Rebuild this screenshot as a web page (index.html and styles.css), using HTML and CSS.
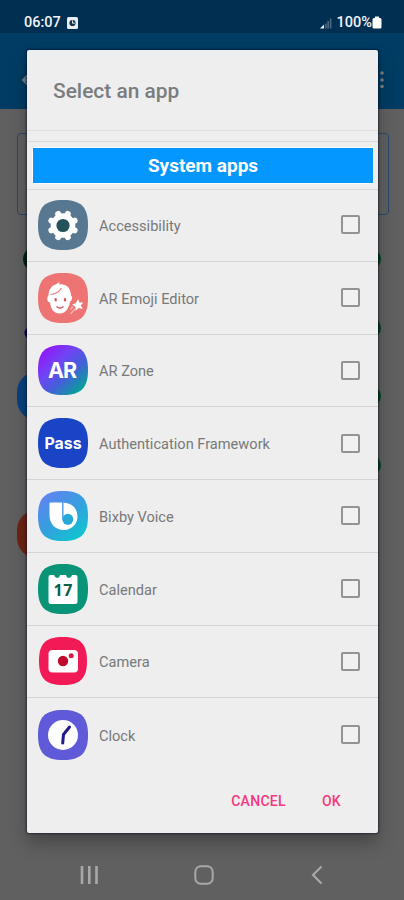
FILE: index.html
```html
<!DOCTYPE html>
<html lang="en">
<head>
<meta charset="utf-8">
<title>Select an app</title>
<link rel="stylesheet" href="styles.css">
</head>
<body>
<div class="screen">
  <header class="status">
    <span class="time">06:07</span>
    <svg class="notice" width="11" height="12" viewBox="0 0 11 12"><rect width="11" height="12" rx="1.5" fill="#e9edf2"/><circle cx="5.5" cy="6" r="3.1" fill="#16324e"/><path d="M5.5 3.5v2.7h2.3" stroke="#e9edf2" fill="none"/></svg>
    <span class="grow"></span>
    <svg class="signal" width="12" height="12" viewBox="0 0 12 12"><path d="M0 11.5 4 7.5V11.5Z" fill="#eef1f6"/><path d="M5 6.5h1.8v5H5zM7.3 4h1.8v7.500H7.300zM9.800 1.500h1.700v10H9.800z" fill="#48657f"/></svg>
    <span class="percent">100%</span>
    <svg class="battery" width="10" height="13" viewBox="0 0 10 13"><path d="M3 .5h4V2h1q1.500 0 1.500 1.500v7.500q0 1.500-1.500 1.500H2Q.5 12.500.5 11V3.500Q.5 2 2 2h1Z" fill="#fff"/></svg>
  </header>
  <div class="appbar">
    <svg width="16" height="16" viewBox="0 0 16 16"><path d="M9 1 2 8l7 7M2 8h14" fill="none" stroke="#6f7e8a" stroke-width="2"/></svg>
    <svg width="4" height="18" viewBox="0 0 4 18"><g fill="#7b7f83"><circle cx="2" cy="2" r="1.800"/><circle cx="2" cy="9" r="1.800"/><circle cx="2" cy="15.500" r="1.800"/></g></svg>
  </div>
  <div class="card"></div>
  <div class="back-list">
    <div class="back-row"><svg width="48" height="48" viewBox="0 0 48 48"><circle cx="18" cy="24" r="12" fill="#002414"/></svg><i class="switch"></i></div>
    <div class="back-row"><svg width="48" height="48" viewBox="0 0 48 48"><circle cx="14" cy="29" r="6.500" fill="#080058"/></svg><i class="switch"></i></div>
    <div class="back-row"><svg width="48" height="48" viewBox="0 0 48 48"><rect width="48" height="48" rx="20" fill="#06427e"/></svg><i class="switch"></i></div>
    <div class="back-row"><span></span><i class="switch"></i></div>
    <div class="back-row"><svg width="48" height="48" viewBox="0 0 48 48"><rect width="48" height="48" rx="20" fill="#6d2415"/></svg></div>
  </div>
  <nav class="navbar">
    <svg width="19" height="20" viewBox="0 0 19 20"><path d="M2 1v18M9.300 1v18M16.500 1v18" stroke="#a8a8a8" stroke-width="2.600"/></svg>
    <svg width="20" height="20" viewBox="0 0 20 20"><rect x="1.300" y="1.300" width="17.400" height="17.400" rx="5.500" fill="none" stroke="#a8a8a8" stroke-width="2"/></svg>
    <svg width="12" height="20" viewBox="0 0 12 20"><path d="M10.500 1.500 2 10l8.500 8.500" fill="none" stroke="#a8a8a8" stroke-width="2.200"/></svg>
  </nav>

  <section class="dialog">
    <h1 class="title">Select an app</h1>
    <div class="section"><h2>System apps</h2></div>
    <ul class="apps">
      <li><svg class="icon" viewBox="0 0 50 50"><path fill="#587892" d="M25 0C43 0 50 7 50 25S43 50 25 50 0 43 0 25 7 0 25 0Z"/><circle cx="25" cy="25.500" r="12.300" fill="#fff"/><g stroke="#fff" stroke-width="6" stroke-linecap="round"><path d="M20.200 13.900l9.600 23.200M29.800 13.900 20.200 37.100M13.400 20.700l23.200 9.600M36.600 20.700 13.400 30.300"/></g><circle cx="25" cy="25.500" r="6.600" fill="#24535b"/></svg><span class="name">Accessibility</span><i class="check"></i></li>
      <li><svg class="icon" viewBox="0 0 50 50"><path fill="#ed7472" d="M25 0C43 0 50 7 50 25S43 50 25 50 0 43 0 25 7 0 25 0Z"/><path fill="#fff" d="M10.500 22.500C10.500 16 14 12.500 18.500 11q1-1 3-1.800-.5 1.500-.3 2C28.500 10.500 33 15 33 22.500q1.500.5 1 3t-2 3.300C31 36 27 40.500 21.500 40.500S13 36.500 12 29.500Q9 29 9.300 25.500 9.500 23 10.500 22.500Z"/><path d="M12.500 21.500q8-1 11-6.500" fill="none" stroke="#ed7472" stroke-width="1.100"/><path d="M17.700 26v1.500M27 26v1.500" stroke="#cf5360" stroke-width="2.200" stroke-linecap="round"/><path d="M18.500 33.500q3.500 3 7 0" fill="none" stroke="#d55c65" stroke-width="1.600"/><path fill="#fff" d="m40 26 1.500 3.600 3.800-.2-2.400 3.100 1.800 3.600-3.900-1-3.100 2.700-.3-4-3.400-2.200 3.800-1.300Z"/><path d="m37 36-4 4.500M34.500 34l-1.500 2" stroke="#f8b6b3" stroke-width="1.300" stroke-linecap="round"/></svg><span class="name">AR Emoji Editor</span><i class="check"></i></li>
      <li><svg class="icon" viewBox="0 0 50 50"><defs><linearGradient id="zone" x1=".12" y1=".1" x2=".85" y2=".88"><stop offset="0" stop-color="#9019f8"/><stop offset=".35" stop-color="#7144f4"/><stop offset=".65" stop-color="#445fd9"/><stop offset="1" stop-color="#0a9e9b"/></linearGradient></defs><path fill="url(#zone)" d="M25 0C43 0 50 7 50 25S43 50 25 50 0 43 0 25 7 0 25 0Z"/><text class="ar" x="24.500" y="32.500" textLength="29">AR</text></svg><span class="name">AR Zone</span><i class="check"></i></li>
      <li><svg class="icon" viewBox="0 0 50 50"><path fill="#1944c6" d="M25 0C43 0 50 7 50 25S43 50 25 50 0 43 0 25 7 0 25 0Z"/><text class="pass" x="25" y="31" textLength="37" lengthAdjust="spacingAndGlyphs">Pass</text></svg><span class="name">Authentication Framework</span><i class="check"></i></li>
      <li><svg class="icon" viewBox="0 0 50 50"><defs><linearGradient id="bixby" x1=".15" y1=".1" x2=".8" y2=".95"><stop offset="0" stop-color="#5d86ef"/><stop offset=".5" stop-color="#359fdf"/><stop offset="1" stop-color="#10c4d0"/></linearGradient></defs><path fill="url(#bixby)" d="M25 0C43 0 50 7 50 25S43 50 25 50 0 43 0 25 7 0 25 0Z"/><path fill="#fff" d="M12.500 11.500H24V27L31 38Q29 39 26 39C17 39 11.500 32.500 11.500 24V12.500q0-1 1-1Z"/><path fill="#fff" d="M25 11.500q14 1 14.500 14Q39.500 34 31 38l-7-3Z"/><circle cx="29.800" cy="28.300" r="5.500" fill="#27a9d7"/><path d="M24.800 11v17" stroke="#5aa2e9" stroke-width="1.500"/></svg><span class="name">Bixby Voice</span><i class="check"></i></li>
      <li><svg class="icon" viewBox="0 0 50 50"><path fill="#099477" d="M25 0C43 0 50 7 50 25S43 50 25 50 0 43 0 25 7 0 25 0Z"/><path fill="#fff" d="M12.500 11H16q1 3 3.200 3T22 11h6q.7 3 2.900 3t3.200-3h3.400q2 0 2 2v24.500q0 2.500-2.500 2.500H13q-2.500 0-2.500-2.500V13q0-2 2-2Z"/><text class="day" x="25" y="31.500" textLength="19">17</text></svg><span class="name">Calendar</span><i class="check"></i></li>
      <li><svg class="icon" viewBox="0 0 50 50"><path fill="#f11a57" d="M25 1C42.500 1 49 8 49 25S42.500 49 25 49 1 42.500 1 25 7.500 1 25 1Z"/><rect x="10.500" y="14" width="29.500" height="22.500" rx="4" fill="#fff"/><circle cx="25" cy="25" r="5.200" fill="#bf0a2b"/><circle cx="33.200" cy="19.800" r="2.500" fill="#dc1742"/></svg><span class="name">Camera</span><i class="check"></i></li>
      <li><svg class="icon" viewBox="0 0 50 50"><path fill="#6059d8" d="M25 0C43 0 50 7 50 25S43 50 25 50 0 43 0 25 7 0 25 0Z"/><circle cx="25" cy="25" r="15" fill="#fff"/><path d="M31.500 17 25.500 24.500 24.700 33" fill="none" stroke="#241a88" stroke-width="3" stroke-linecap="round" stroke-linejoin="round"/></svg><span class="name">Clock</span><i class="check"></i></li>
    </ul>
    <footer class="actions"><span class="cancel">CANCEL</span><span class="ok">OK</span></footer>
  </section>
</div>
</body>
</html>
```
FILE: styles.css
```css
* { box-sizing: border-box; }
body { margin: 0; font-family: Roboto, "Liberation Sans", sans-serif; }
.screen { position: relative; display: flex; flex-direction: column; width: 404px; height: 900px; overflow: hidden; background: #606060; }
svg { display: block; flex: none; }

.status { display: flex; align-items: center; height: 33px; padding: 12px 22px 0 24px; background: #002f51; color: #f1f4f8; font-size: 14.5px; font-weight: 500; line-height: 20px; }
.time { width: 37px; }
.notice { margin-left: 6px; }
.grow { flex: 1; }
.percent { margin-left: 5px; }
.appbar { display: flex; align-items: center; justify-content: space-between; height: 76px; padding: 18px 20px 0 21px; background: #003c64; }
.card { height: 82px; margin: 24px 15px 0 17px; border: 1px solid #28486d; border-radius: 4px; }
.back-list { height: 343px; margin: 10px 23px 0 17px; }
.back-row { display: flex; align-items: center; justify-content: space-between; height: 68.6px; }
.switch { width: 20px; height: 20px; border-radius: 50%; background: #00451d; }
.navbar { display: flex; align-items: center; justify-content: space-between; margin-top: auto; height: 50px; padding: 0 81px 0 80px; }
.navbar svg:nth-child(2) { margin-right: 2px; }

.dialog { position: absolute; left: 27px; top: 50px; display: flex; flex-direction: column; width: 351px; height: 782.500px; border-radius: 2px; background: #eee; box-shadow: 0 0 2px 1px rgba(0, 0, 30, .45), 0 10px 18px rgba(0, 0, 0, .28); }
.title { height: 81px; margin: 0; padding: 26px 26px 0; border-bottom: 1px solid #dfdfdf; color: #7a7d80; font-size: 20.900px; font-weight: 500; line-height: 30px; }
.section { height: 49px; margin-top: 10px; padding: 5px 4px 5px 5px; border: solid #dadada; border-width: 1px 0; }
.section h2 { height: 37px; margin: 0; border: 1px solid #fafaff; background: #0497ff; color: #fff; font-size: 19px; font-weight: 700; line-height: 36px; text-align: center; }
.apps { margin: -1px 0 0; padding: 0; list-style: none; }
.apps li { display: flex; align-items: center; height: 72.750px; padding: 0 18px 0 11px; border-bottom: 1px solid #d4d4d4; }
.apps li:last-child { border-bottom: 0; }
.icon { width: 50px; height: 50px; }
.icon text { fill: #fff; font-family: "Open Sans", sans-serif; font-weight: 700; text-anchor: middle; }
.icon .ar { font-family: Inter, sans-serif; font-size: 21.500px; }
.icon .pass { font-family: Inter, sans-serif; font-size: 16px; }
.icon .day { fill: #09604a; font-size: 16px; }
.name { flex: 1; margin-left: 11px; padding-top: 2px; color: #77797a; font-size: 14.600px; line-height: 20px; }
.check { width: 19px; height: 19px; border: 2px solid #929394; border-radius: 2px; background: #f1f1f1; }
.actions { display: flex; justify-content: flex-end; margin-top: auto; padding: 0 37px 21px 0; gap: 36px; color: #f53880; font-size: 14px; font-weight: 500; line-height: 22px; letter-spacing: .3px; }
```
